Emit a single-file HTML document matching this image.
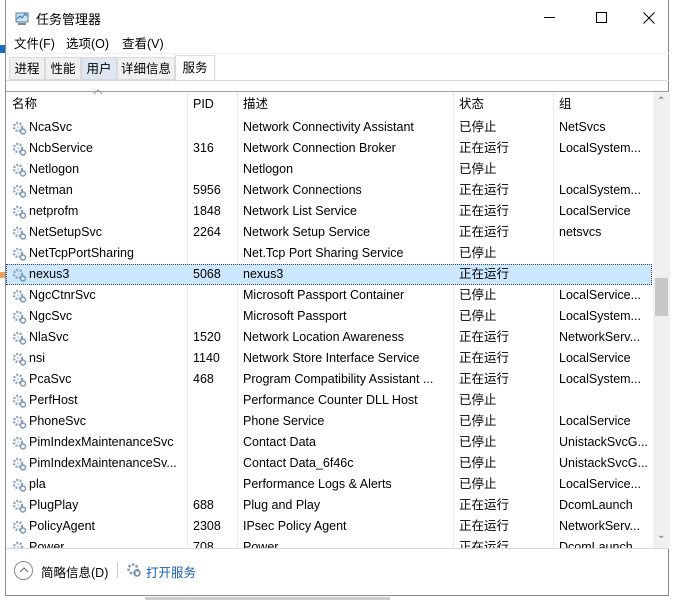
<!DOCTYPE html>
<html><head><meta charset="utf-8"><style>
*{margin:0;padding:0;box-sizing:border-box}
body{width:673px;height:600px;background:#fff;position:relative;overflow:hidden;font-family:"Liberation Sans","Noto Sans CJK SC",sans-serif;font-size:12.5px;color:#000}
.abs{position:absolute;white-space:nowrap}
.win{left:5px;top:0;width:664px;height:596px;border:1px solid #8a8a8a;border-top:none;background:#fff}
.row{position:absolute;left:0;width:646px;height:21px;line-height:21px;white-space:nowrap}
.row span{position:absolute;top:0;overflow:hidden}
.c1{left:23px}.c2{left:187px}.c3{left:237px}.c4{left:453px}.c5{left:553px}
.ic{position:absolute;left:6px;top:4px}
.tab{position:absolute;top:57px;height:23px;line-height:22px;background:#f0f0f0;border:1px solid #dadada;font-size:12.5px;white-space:nowrap;text-align:center}
</style></head><body>
<div class="abs" style="left:0;top:45px;width:5px;height:8px;background:#1a6fc0"></div>
<div class="abs" style="left:0;top:272px;width:5px;height:6px;background:#e8a060"></div>
<div class="abs" style="left:145px;top:597px;width:245px;height:3px;background:#ccc"></div>
<div class="abs win">
 <svg class="abs" style="left:8px;top:10px" width="16" height="16" viewBox="0 0 16 16"><rect x="2" y="3" width="12" height="9" fill="#cfe3f3" stroke="#5a7a99"/><path d="M3 9l3-3 2 2 3-4 2 2" stroke="#2a6fb0" fill="none"/><rect x="4" y="13" width="8" height="2" fill="#7a8a9a"/></svg>
 <div class="abs" style="left:30px;top:9px;font-size:13px">任务管理器</div>
 <div class="abs" style="left:538px;top:17px;width:11px;height:1px;background:#000"></div>
 <div class="abs" style="left:590px;top:12px;width:11px;height:11px;border:1px solid #000"></div>
 <svg class="abs" style="left:637px;top:12px" width="12" height="12"><path d="M0.5 0.5L11.5 11.5M11.5 0.5L0.5 11.5" stroke="#000"/></svg>
 <div class="abs" style="left:8px;top:36px;line-height:16px">文件(F)</div>
 <div class="abs" style="left:60px;top:36px;line-height:16px">选项(O)</div>
 <div class="abs" style="left:116px;top:36px;line-height:16px">查看(V)</div>
 <div class="abs" style="left:0;top:53px;width:663px;height:1px;background:#f0f0f0"></div>
 <div class="tab" style="left:3px;width:36px">进程</div>
 <div class="tab" style="left:39px;width:36px">性能</div>
 <div class="tab" style="left:75px;width:36px;background:#dce7f3">用户</div>
 <div class="tab" style="left:111px;width:58px">详细信息</div>
 <div class="abs" style="left:169px;top:55px;width:40px;height:27px;background:#fff;border:1px solid #dadada;border-bottom:none;line-height:24px;text-align:center">服务</div>
 <div class="abs" style="left:0;top:80px;width:663px;height:1px;background:#dadada"></div>
 <div class="abs" style="left:0;top:91px;width:663px;height:1px;background:#a0a0a0"></div>
 <svg class="abs" style="left:87px;top:89px" width="10" height="6"><path d="M1 5l4-4 4 4" stroke="#999" fill="none"/></svg>
 <div class="row" style="top:93px;height:22px;line-height:22px"><span style="left:6px">名称</span><span class="c2">PID</span><span class="c3">描述</span><span class="c4">状态</span><span class="c5">组</span></div>
 <div class="abs" style="left:181px;top:92px;width:1px;height:456px;background:#ececec"></div>
 <div class="abs" style="left:231px;top:92px;width:1px;height:456px;background:#ececec"></div>
 <div class="abs" style="left:447px;top:92px;width:1px;height:456px;background:#ececec"></div>
 <div class="abs" style="left:547px;top:92px;width:1px;height:456px;background:#ececec"></div>
 <div class="abs" style="left:647px;top:92px;width:17px;height:456px;background:#f0f0f0"></div>
 <div class="abs" style="left:649px;top:278px;width:13px;height:38px;background:#c8c8c8"></div>
 <div class="abs" style="left:651px;top:96px;color:#666;font-size:10px">&#8963;</div>
 <div class="abs" style="left:651px;top:530px;color:#666;font-size:10px">&#8964;</div>
 <div id="rows" class="abs" style="left:0;top:117px;width:647px;height:431px;overflow:hidden"></div>
 <div class="abs" style="left:0;top:548px;width:663px;height:1px;background:#dadada"></div>
 <div class="abs" style="left:8px;top:561px;width:19px;height:19px;border:1px solid #888;border-radius:50%"></div>
 <svg class="abs" style="left:12px;top:566px" width="12" height="8"><path d="M2 6l4-4 4 4" stroke="#666" fill="none"/></svg>
 <div class="abs" style="left:35px;top:562px">简略信息(D)</div>
 <div class="abs" style="left:111px;top:562px;width:1px;height:16px;background:#ccc"></div>
 <svg class="abs" style="left:120px;top:562px" width="16" height="16" viewBox="0 0 16 16"><circle cx="7" cy="7" r="4.5" fill="none" stroke="#8a9aab" stroke-width="2.5" stroke-dasharray="2.5 1.5"/><circle cx="11" cy="11" r="3" fill="none" stroke="#6a8aab" stroke-width="1.5"/></svg>
 <div class="abs" style="left:140px;top:562px;color:#1a5fb4">打开服务</div>
</div>
<script>
var d=[["NcaSvc","","Network Connectivity Assistant","已停止","NetSvcs"],
["NcbService","316","Network Connection Broker","正在运行","LocalSystem..."],
["Netlogon","","Netlogon","已停止",""],
["Netman","5956","Network Connections","正在运行","LocalSystem..."],
["netprofm","1848","Network List Service","正在运行","LocalService"],
["NetSetupSvc","2264","Network Setup Service","正在运行","netsvcs"],
["NetTcpPortSharing","","Net.Tcp Port Sharing Service","已停止",""],
["nexus3","5068","nexus3","正在运行",""],
["NgcCtnrSvc","","Microsoft Passport Container","已停止","LocalService..."],
["NgcSvc","","Microsoft Passport","已停止","LocalSystem..."],
["NlaSvc","1520","Network Location Awareness","正在运行","NetworkServ..."],
["nsi","1140","Network Store Interface Service","正在运行","LocalService"],
["PcaSvc","468","Program Compatibility Assistant ...","正在运行","LocalSystem..."],
["PerfHost","","Performance Counter DLL Host","已停止",""],
["PhoneSvc","","Phone Service","已停止","LocalService"],
["PimIndexMaintenanceSvc","","Contact Data","已停止","UnistackSvcG..."],
["PimIndexMaintenanceSv...","","Contact Data_6f46c","已停止","UnistackSvcG..."],
["pla","","Performance Logs & Alerts","已停止","LocalService..."],
["PlugPlay","688","Plug and Play","正在运行","DcomLaunch"],
["PolicyAgent","2308","IPsec Policy Agent","正在运行","NetworkServ..."],
["Power","708","Power","正在运行","DcomLaunch"]];
var ic='<svg class="ic" width="15" height="14" viewBox="0 0 15 14"><circle cx="6" cy="6" r="4" fill="none" stroke="#8fa3b8" stroke-width="2.4" stroke-dasharray="2 1.4"/><circle cx="6" cy="6" r="1.3" fill="#cfd8e2"/><circle cx="11" cy="10.5" r="2.5" fill="none" stroke="#7895b3" stroke-width="1.4"/></svg>';
var h='';d.forEach(function(r,i){var sel=i==7;h+='<div class="row" style="top:'+(i*21)+'px;'+(sel?'background:#cce8ff;outline:1px dotted #444;outline-offset:-1px;':'')+'">'+ic+'<span class="c1">'+r[0]+'</span><span class="c2">'+r[1]+'</span><span class="c3" style="width:205px">'+r[2].replace('&','&amp;')+'</span><span class="c4">'+r[3]+'</span><span class="c5" style="width:90px">'+r[4]+'</span></div>'});
document.getElementById('rows').innerHTML=h;
</script>
</body></html>
